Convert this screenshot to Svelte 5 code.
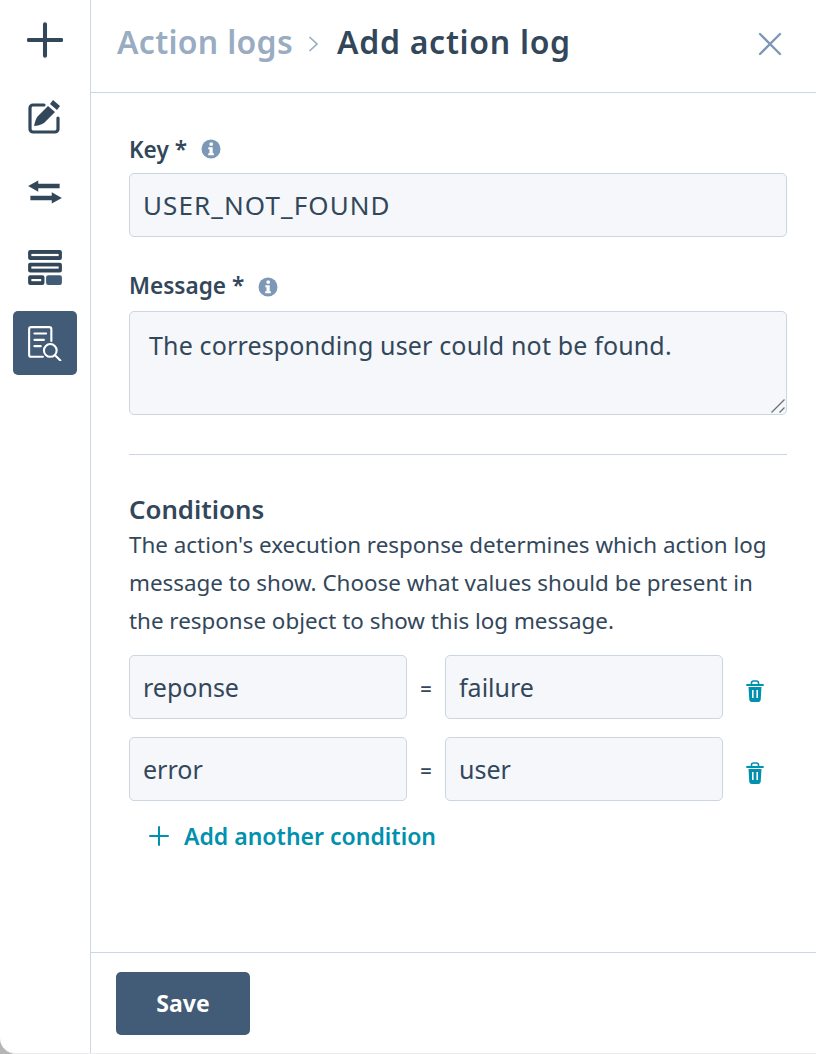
<script lang="ts">
	const conditions = [
		{ key: 'reponse', value: 'failure' },
		{ key: 'error', value: 'user' }
	];
</script>

<div class="backdrop">
	<div class="panel">
		<nav class="rail">
			<button class="rail-btn" aria-label="Add">
				<svg width="36" height="36" viewBox="2 2 32 32"><path d="M18 4v28M3.500 18h29" stroke="#33475b" stroke-width="3.600" stroke-linecap="round" fill="none" /></svg>
			</button>
			<button class="rail-btn edit" aria-label="Edit">
				<svg width="36" height="36" viewBox="2 0 32 36" fill="none"><path d="M17 6H6a3 3 0 0 0-3 3v21a3 3 0 0 0 3 3h22a3 3 0 0 0 3-3V19" stroke="#33475b" stroke-width="3.200" stroke-linecap="round" /><path d="M26 1l7 6-3 4-7-6zM21 7l7 6-11 11c-3 2-7 3-10 3 1-4 2-8 4-10z" fill="#33475b" /></svg>
			</button>
			<button class="rail-btn" aria-label="Swap">
				<svg width="36" height="36" viewBox="2 0 32 32" fill="#33475b"><path d="M3 10.700l9-5v3h19v4H12v3z" /><path d="M33 21.300l-9-5v3H5v4h19v3z" /></svg>
			</button>
			<button class="rail-btn" aria-label="Layout">
				<svg width="36" height="36" viewBox="2 2 33 33" fill="none"><rect x="3" y="3" width="31" height="9" rx="2" fill="#33475b" /><rect x="6" y="6.500" width="25" height="2" fill="#fff" /><rect x="3" y="14.500" width="31" height="9" rx="2" fill="#33475b" /><rect x="6" y="18" width="25" height="2" fill="#fff" /><rect x="3" y="26" width="15" height="9" rx="2" fill="#33475b" /><rect x="6" y="29.500" width="9" height="2" fill="#fff" /><rect x="19.500" y="26" width="14.500" height="9" rx="2" fill="#425b76" /></svg>
			</button>
			<button class="rail-btn active" aria-label="Action logs">
				<svg width="36" height="36" viewBox="2 1 34 34" fill="none" stroke="#fff" stroke-width="2" stroke-linecap="round"><path d="M17 31H6a2 2 0 0 1-2-2V5a2 2 0 0 1 2-2h17a2 2 0 0 1 2 2v11" /><path d="M9 9h11M9 15h9M9 21h6" /><circle cx="24" cy="25" r="6" /><path d="M28.500 29.500l5 5" /></svg>
			</button>
		</nav>

		<div class="main">
			<header class="top">
				<h1><span class="crumb">Action logs</span><svg class="chev" width="12" height="18" viewBox="0 0 12 18" fill="none"><path d="M2 2.500l7 6.500-7 6.500" stroke="#99acc2" stroke-width="1.700" stroke-linecap="round" /></svg><span class="here">Add action log</span></h1>
				<button class="close" aria-label="Close">
					<svg width="24" height="24" viewBox="0 0 24 24"><path d="M2 2l20 20M22 2L2 22" stroke="#7c98b6" stroke-width="2.300" stroke-linecap="round" /></svg>
				</button>
			</header>

			<form class="form">
				<div class="label-row">
					<label for="key">Key *</label>
					<svg class="info" width="20" height="20" viewBox="0 0 20 20"><circle cx="10" cy="10" r="9.500" fill="#7c98b6" /><rect x="8.500" y="3.500" width="3.400" height="3.200" rx="1" fill="#fff" /><path d="M7.300 8.300h4.400v6h1.200v2H7.200v-2h1.300v-4H7.300z" fill="#fff" /></svg>
				</div>
				<input id="key" class="field wide" value="USER_NOT_FOUND" />

				<div class="label-row second">
					<label for="message">Message *</label>
					<svg class="info" width="20" height="20" viewBox="0 0 20 20"><circle cx="10" cy="10" r="9.500" fill="#7c98b6" /><rect x="8.500" y="3.500" width="3.400" height="3.200" rx="1" fill="#fff" /><path d="M7.300 8.300h4.400v6h1.200v2H7.200v-2h1.300v-4H7.300z" fill="#fff" /></svg>
				</div>
				<div class="area-wrap">
					<div id="message" class="field area" role="textbox" aria-multiline="true" tabindex="0">The corresponding user could not be found.</div>
					<svg class="grip" width="16" height="16" viewBox="0 0 16 16" fill="none"><path d="M1.500 14.500l13-13M9.500 14.500l5-5" stroke="#6f6f6f" stroke-width="1.300" /></svg>
				</div>

				<hr />

				<h2>Conditions</h2>
				<p>The action's execution response determines which action log message to show. Choose what values should be present in the response object to show this log message.</p>

				<div class="conditions">
					{#each conditions as c}
						<div class="cond">
							<input class="field" value={c.key} aria-label="Key" />
							<span class="eq">=</span>
							<input class="field" value={c.value} aria-label="Value" />
							<button type="button" class="trash" aria-label="Delete">
								<svg width="18" height="24" viewBox="0 0 18 24" fill="none"><path d="M1 5h16" stroke="#0091ae" stroke-width="1.800" stroke-linecap="round" /><path d="M5.500 4.500V3a2 2 0 0 1 2-2h3a2 2 0 0 1 2 2v1.500" stroke="#0091ae" stroke-width="1.600" /><path fill-rule="evenodd" d="M2.500 7h13l-.8 13a2.500 2.500 0 0 1-2.500 2H5.800a2.500 2.500 0 0 1-2.500-2zM6 10v8h1.600v-8zM10.400 10v8H12v-8z" fill="#0091ae" /></svg>
							</button>
						</div>
					{/each}
				</div>

				<button type="button" class="add">
					<svg width="20" height="20" viewBox="0 0 20 20"><path d="M10 1v18M1 10h18" stroke="#0091ae" stroke-width="2" stroke-linecap="round" /></svg>
					Add another condition
				</button>
			</form>

			<footer class="bottom">
				<button class="save">Save</button>
			</footer>
		</div>
	</div>
</div>

<style>
	:global(body) {
		margin: 0;
		background: #b5b5b5;
	}

	.backdrop {
		width: 816px;
		height: 1054px;
		overflow: hidden;
	}

	.panel {
		display: flex;
		height: 1054px;
		box-sizing: border-box;
		border-bottom: 1px solid #ececec;
		background: #fff;
		border-bottom-left-radius: 16px;
		overflow: hidden;
		font-family: 'Noto Sans', sans-serif;
		color: #33475b;
	}

	button {
		font-family: inherit;
		border: 0;
		background: none;
		padding: 0;
		cursor: pointer;
	}

	.rail {
		width: 91px;
		flex: none;
		box-sizing: border-box;
		border-right: 1px solid #cbd6e2;
		padding: 8px 13px 0;
		display: flex;
		flex-direction: column;
		gap: 11px;
	}

	.rail-btn {
		width: 64px;
		height: 64px;
		border-radius: 5px;
		display: flex;
		align-items: center;
		justify-content: center;
	}

	.rail-btn.edit {
		margin-top: 2px;
	}

	.rail-btn.active {
		background: #425b76;
		margin-top: 1px;
	}

	.main {
		flex: 1;
		display: flex;
		flex-direction: column;
		min-width: 0;
	}

	.top {
		height: 93px;
		flex: none;
		box-sizing: border-box;
		border-bottom: 1px solid #cbd6e2;
		display: flex;
		align-items: center;
		justify-content: space-between;
		padding: 0 34px 2px 26px;
	}

	h1 {
		margin: 0 0 7px;
		font-size: 32px;
		font-weight: 600;
		letter-spacing: 0.3px;
		display: flex;
		align-items: center;
		line-height: 40px;
	}

	.crumb {
		color: #99acc2;
	}

	.here {
		letter-spacing: 0.7px;
	}

	.chev {
		margin: 4px 17px 0 15px;
	}

	.close {
		display: flex;
		margin-bottom: 3px;
	}

	.form {
		flex: 1;
		padding: 40px 29px 0 38px;
		display: flex;
		flex-direction: column;
		align-items: stretch;
	}

	.label-row {
		display: flex;
		align-items: center;
		gap: 14px;
		height: 34px;
		margin-bottom: 7px;
		margin-top: -1px;
		font-size: 22.600px;
		font-weight: 600;
	}

	.label-row.second {
		margin-top: 33px;
		margin-bottom: 7px;
	}

	.label-row.second label {
		margin-bottom: 3px;
	}

	.field {
		box-sizing: border-box;
		background: #f5f7fa;
		border: 1px solid #cbd6e2;
		border-radius: 5px;
		height: 64px;
		padding: 0 13px;
		font-family: inherit;
		font-size: 25px;
		color: #33475b;
		outline: none;
		min-width: 0;
	}

	.wide {
		width: 100%;
		font-size: 26px;
		letter-spacing: 1.100px;
	}

	.area-wrap {
		position: relative;
	}

	.area {
		height: 104px;
		padding: 15px 19px;
		line-height: 36px;
		letter-spacing: 0.150px;
		width: 100%;
	}

	.grip {
		position: absolute;
		right: 1px;
		bottom: 1px;
	}

	hr {
		border: 0;
		border-top: 1px solid #cbd6e2;
		margin: 39px 0 0;
		width: 100%;
	}

	h2 {
		margin: 38px 0 0;
		font-size: 25.800px;
		font-weight: 600;
		line-height: 33px;
	}

	p {
		margin: 0;
		font-size: 22.400px;
		line-height: 38px;
	}

	.conditions {
		display: flex;
		flex-direction: column;
		gap: 18px;
		margin-top: 15px;
	}

	.cond {
		display: grid;
		grid-template-columns: 278px 38px 278px 64px;
		align-items: center;
	}

	.cond .field {
		width: 100%;
	}

	.eq {
		text-align: center;
		font-size: 20px;
		font-weight: 600;
		margin-top: 3px;
	}

	.trash {
		display: flex;
		justify-content: center;
		margin-top: 9px;
	}

	.add {
		display: flex;
		align-items: center;
		gap: 15px;
		margin: 21px 0 0 20px;
		font-size: 23px;
		font-weight: 600;
		color: #0091ae;
		line-height: 28px;
	}

	.bottom {
		height: 101px;
		flex: none;
		box-sizing: border-box;
		border-top: 1px solid #cbd6e2;
		padding: 19px 25px 0;
	}

	.save {
		width: 134px;
		height: 63px;
		background: #425b76;
		color: #fff;
		border-radius: 5px;
		font-size: 23px;
		font-weight: 700;
		padding-bottom: 2px;
	}
</style>
